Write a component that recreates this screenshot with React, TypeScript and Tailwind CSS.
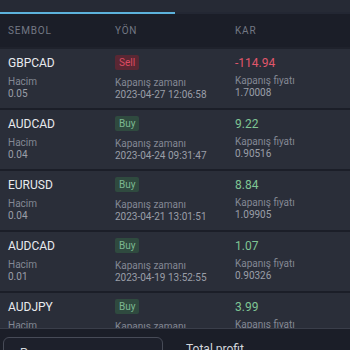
import React from "react";

type Row = {
  sym: string;
  side: "Buy" | "Sell";
  vol: string;
  time: string;
  profit: string;
  price: string;
};

const rows: Row[] = [
  { sym: "GBPCAD", side: "Sell", vol: "0.05", time: "2023-04-27 12:06:58", profit: "-114.94", price: "1.70008" },
  { sym: "AUDCAD", side: "Buy", vol: "0.04", time: "2023-04-24 09:31:47", profit: "9.22", price: "0.90516" },
  { sym: "EURUSD", side: "Buy", vol: "0.04", time: "2023-04-21 13:01:51", profit: "8.84", price: "1.09905" },
  { sym: "AUDCAD", side: "Buy", vol: "0.01", time: "2023-04-19 13:52:55", profit: "1.07", price: "0.90326" },
  { sym: "AUDJPY", side: "Buy", vol: "0.01", time: "2023-04-18 10:12:40", profit: "3.99", price: "89.412" },
];

function TradeRow({ r }: { r: Row }) {
  const sell = r.side === "Sell";
  return (
    <div className="flex h-[59px] shrink-0 bg-[#2a2e39] pl-[8px]">
      <div className="w-[107px] pt-[8px]">
        <div className="text-[12px] leading-[13px] text-[#e8eaee]">{r.sym}</div>
        <div className="mt-[6px] text-[10px] leading-[11px] text-[#838894]">Hacim</div>
        <div className="mt-[0.5px] text-[10px] leading-[11px] text-[#9a9ea8]">{r.vol}</div>
      </div>
      <div className="w-[120px] pt-[6px]">
        <div className="flex">
          <span
            className={
              sell
                ? "h-[15px] rounded-[2px] bg-[#5a2733] px-[4px] text-[10px] leading-[15px] text-[#dc4b62]"
                : "h-[15px] rounded-[2px] bg-[#2f4a3f] px-[4px] text-[10px] leading-[15px] text-[#7cb891]"
            }
          >
            {r.side}
          </span>
        </div>
        <div className="mt-[7px] text-[10px] leading-[11px] text-[#838894]">Kapanış zamanı</div>
        <div className="mt-[0.5px] text-[10px] leading-[11px] text-[#9a9ea8]">{r.time}</div>
      </div>
      <div className="flex-1 pt-[8px]">
        <div
          className={
            sell
              ? "text-[12px] leading-[13px] text-[#e0566b]"
              : "text-[12px] leading-[13px] text-[#7fc594]"
          }
        >
          {r.profit}
        </div>
        <div className="mt-[5px] text-[10px] leading-[11px] text-[#838894]">Kapanış fiyatı</div>
        <div className="mt-[0.5px] text-[10px] leading-[11px] text-[#9a9ea8]">{r.price}</div>
      </div>
    </div>
  );
}

export default function App() {
  return (
    <div
      className="flex h-[350px] w-[350px] flex-col overflow-hidden bg-[#1b1e28]"
      style={{ fontFamily: "Roboto, 'Liberation Sans', sans-serif" }}
    >
      <div className="h-[12px] shrink-0 bg-[#262a35]" />
      <div className="flex h-[2px] shrink-0 bg-[#232733]">
        <div className="w-[175px] bg-[#5cb2dc]" />
      </div>
      <div className="flex h-[33px] shrink-0 items-center bg-[#1b1e28] pl-[8px] text-[10px] uppercase tracking-[0.8px] text-[#737884]">
        <div className="w-[107px]">Sembol</div>
        <div className="w-[120px]">Yön</div>
        <div>Kar</div>
      </div>
      <div className="flex min-h-0 flex-1 flex-col gap-[2px] overflow-hidden border-t-2 border-[#1f222c] bg-[#1b1e28]">
        {rows.map((r, i) => (
          <TradeRow key={i} r={r} />
        ))}
      </div>
      <div className="flex h-[22px] shrink-0 overflow-hidden border-t border-[#3a3e4a] bg-[#1b1e28]">
        <div className="ml-[3px] mt-[8px] h-[40px] w-[160px] shrink-0 rounded-[6px] border border-[#474b57] bg-[#1d202b] pl-[16px] pt-[8px] text-[12px] leading-[14px] text-[#d4d7dd]">
          Poz
        </div>
        <div className="ml-[23px] mt-[13px] text-[12px] leading-[14px] text-[#d4d7dd]">Total profit</div>
      </div>
    </div>
  );
}
